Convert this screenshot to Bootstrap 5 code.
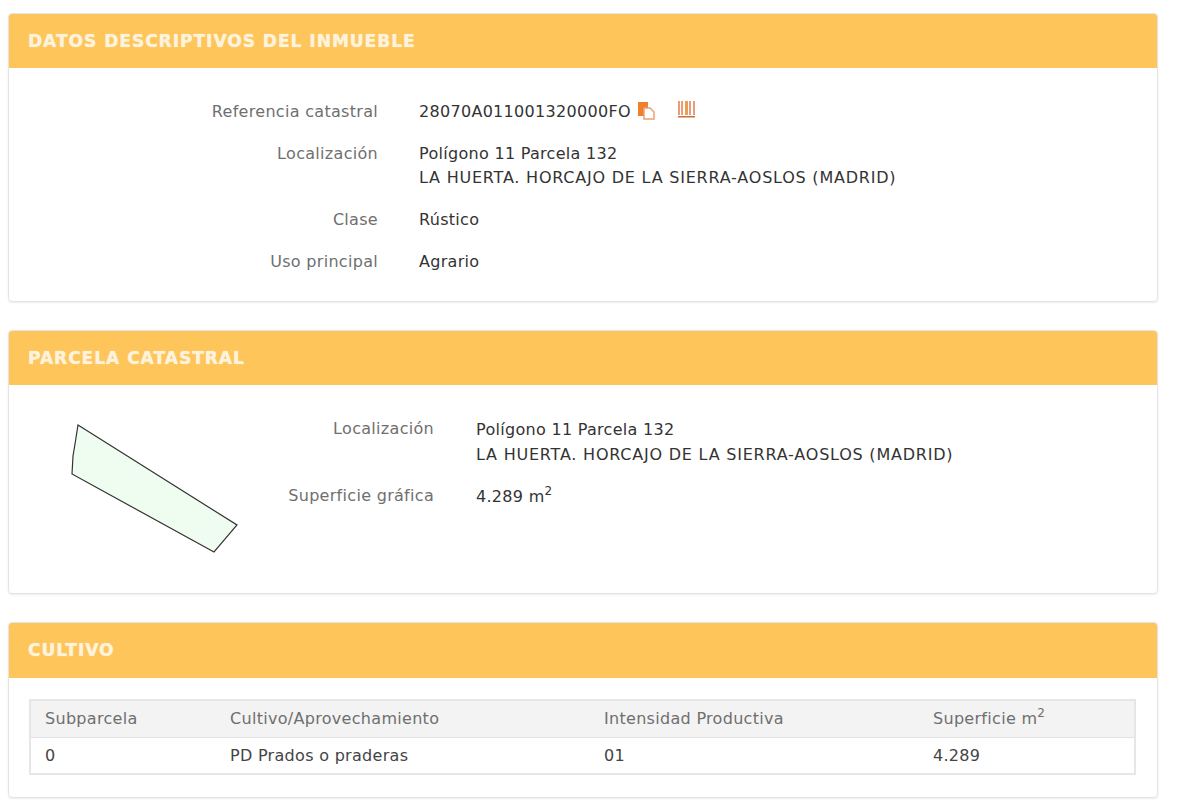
<!DOCTYPE html>
<html lang="es">
<head>
  <meta charset="UTF-8" />
  <meta name="viewport" content="width=device-width, initial-scale=1.0"/>
  <title>Datos descriptivos del inmueble</title>
  <link href="https://cdn.jsdelivr.net/npm/bootstrap@5.3.0/dist/css/bootstrap.min.css" rel="stylesheet"/>
  <style>
    body {
      font-family: "DejaVu Sans", Verdana, sans-serif;
      font-size: 16px;
      letter-spacing: .3px;
      line-height: 24px;
      color: #333;
      background: #fff;
      padding: 13px 20px 0 8px;
    }
    .ficha {
      border: 1px solid #e4e4e4;
      border-radius: 4px;
      box-shadow: 0 1px 2px rgba(0,0,0,.08);
      margin-bottom: 28px;
      overflow: hidden;
    }
    .ficha-head {
      background: #fec55a;
      color: #fdf3dc;
      font-weight: 700;
      font-size: 17px;
      letter-spacing: 1px;
      text-shadow: 0 0 1px #fdf3dc;
      height: 55px;
      line-height: 56px;
      padding-left: 20px;
      margin: -1px -1px 0;
    }
    .ficha-cultivo .ficha-head { height: 56px; }
    .dato-label {
      color: #6f6f6f;
      text-align: right;
      flex: 0 0 369px;
    }
    .dato-valor { margin-left: 41px; }
    .dato-mayus { letter-spacing: .78px; }
    .datos-body { padding: 32px 0 27px; }
    .parcela-body { padding: 32px 0 0; height: 208px; }
    .parcela-body .dato-label { flex: 0 0 178px; }
    .parcela-body .dato-valor { margin-left: 42px; line-height: 25px; }
    .parcela-body .dato-fila { margin-bottom: 17px; }
    .parcela-plano { flex: 0 0 247px; margin-top: -1px; }
    .dato-fila { margin-bottom: 18px; }
    .dato-fila:last-child { margin-bottom: 0; }
    .cultivo-body { padding: 21px 21px 22px 20px; }
    .tabla-cultivo {
      border: 2px solid #e6e6e6;
      margin: 0;
      table-layout: fixed;
      width: 100%;
    }
    .tabla-cultivo th, .tabla-cultivo td {
      padding: 6px 14px 5px;
      border-bottom: 0;
      font-weight: 400;
      color: #444;
    }
    .tabla-cultivo th {
      background: #f3f3f3;
      color: #6f6f6f;
      padding-bottom: 6px;
      border-bottom: 1px solid #e2e2e2;
    }
    sup { font-size: 12px; top: -.6em; }
    .icono { vertical-align: -3px; }
    .icono-copia { margin-left: 2px; }
    .icono-barras { margin-left: 22px; vertical-align: -2px; }
  </style>
</head>
<body>

<div class="ficha">
  <div class="ficha-head">DATOS DESCRIPTIVOS DEL INMUEBLE</div>
  <div class="datos-body">
    <div class="d-flex dato-fila">
      <div class="dato-label">Referencia catastral</div>
      <div class="dato-valor">28070A011001320000FO
        <svg class="icono icono-copia" width="18" height="18" viewBox="0 0 18 18"><rect x="0" y="0" width="10" height="14" fill="#ee7f2c"/><path d="M6 6h6l4 4v7H6z" fill="#fff" stroke="#f0a070" stroke-width="1.5"/></svg><svg class="icono icono-barras" width="18" height="18" viewBox="0 0 18 18"><g fill="#ee9a78"><rect x="0" y="0" width="2" height="14"/><rect x="3" y="0" width="2" height="14"/><rect x="7" y="0" width="3" height="14" fill="#e9a050"/><rect x="11" y="0" width="2" height="14"/><rect x="15" y="0" width="2" height="14"/></g><rect x="0" y="15" width="17" height="1.5" fill="#c9703a"/></svg>
      </div>
    </div>
    <div class="d-flex dato-fila">
      <div class="dato-label">Localización</div>
      <div class="dato-valor">Polígono 11 Parcela 132<br><span class="dato-mayus">LA HUERTA. HORCAJO DE LA SIERRA-AOSLOS (MADRID)</span></div>
    </div>
    <div class="d-flex dato-fila">
      <div class="dato-label">Clase</div>
      <div class="dato-valor">Rústico</div>
    </div>
    <div class="d-flex dato-fila">
      <div class="dato-label">Uso principal</div>
      <div class="dato-valor">Agrario</div>
    </div>
  </div>
</div>

<div class="ficha">
  <div class="ficha-head">PARCELA CATASTRAL</div>
  <div class="parcela-body d-flex">
    <div class="parcela-plano">
      <svg width="247" height="170" viewBox="0 0 247 170"><polygon points="69,9 228,109 205,136 63,58 64,40 66,28" fill="#effdf0" stroke="#333" stroke-width="1.2"/></svg>
    </div>
    <div>
      <div class="d-flex dato-fila">
        <div class="dato-label">Localización</div>
        <div class="dato-valor">Polígono 11 Parcela 132<br><span class="dato-mayus">LA HUERTA. HORCAJO DE LA SIERRA-AOSLOS (MADRID)</span></div>
      </div>
      <div class="d-flex dato-fila">
        <div class="dato-label">Superficie gráfica</div>
        <div class="dato-valor">4.289 m<sup>2</sup></div>
      </div>
    </div>
  </div>
</div>

<div class="ficha ficha-cultivo">
  <div class="ficha-head">CULTIVO</div>
  <div class="cultivo-body">
    <table class="table tabla-cultivo">
      <thead>
        <tr>
          <th style="width:186px">Subparcela</th>
          <th style="width:374px">Cultivo/Aprovechamiento</th>
          <th style="width:329px">Intensidad Productiva</th>
          <th>Superficie m<sup>2</sup></th>
        </tr>
      </thead>
      <tbody>
        <tr><td>0</td><td>PD Prados o praderas</td><td>01</td><td>4.289</td></tr>
      </tbody>
    </table>
  </div>
</div>

</body>
</html>
